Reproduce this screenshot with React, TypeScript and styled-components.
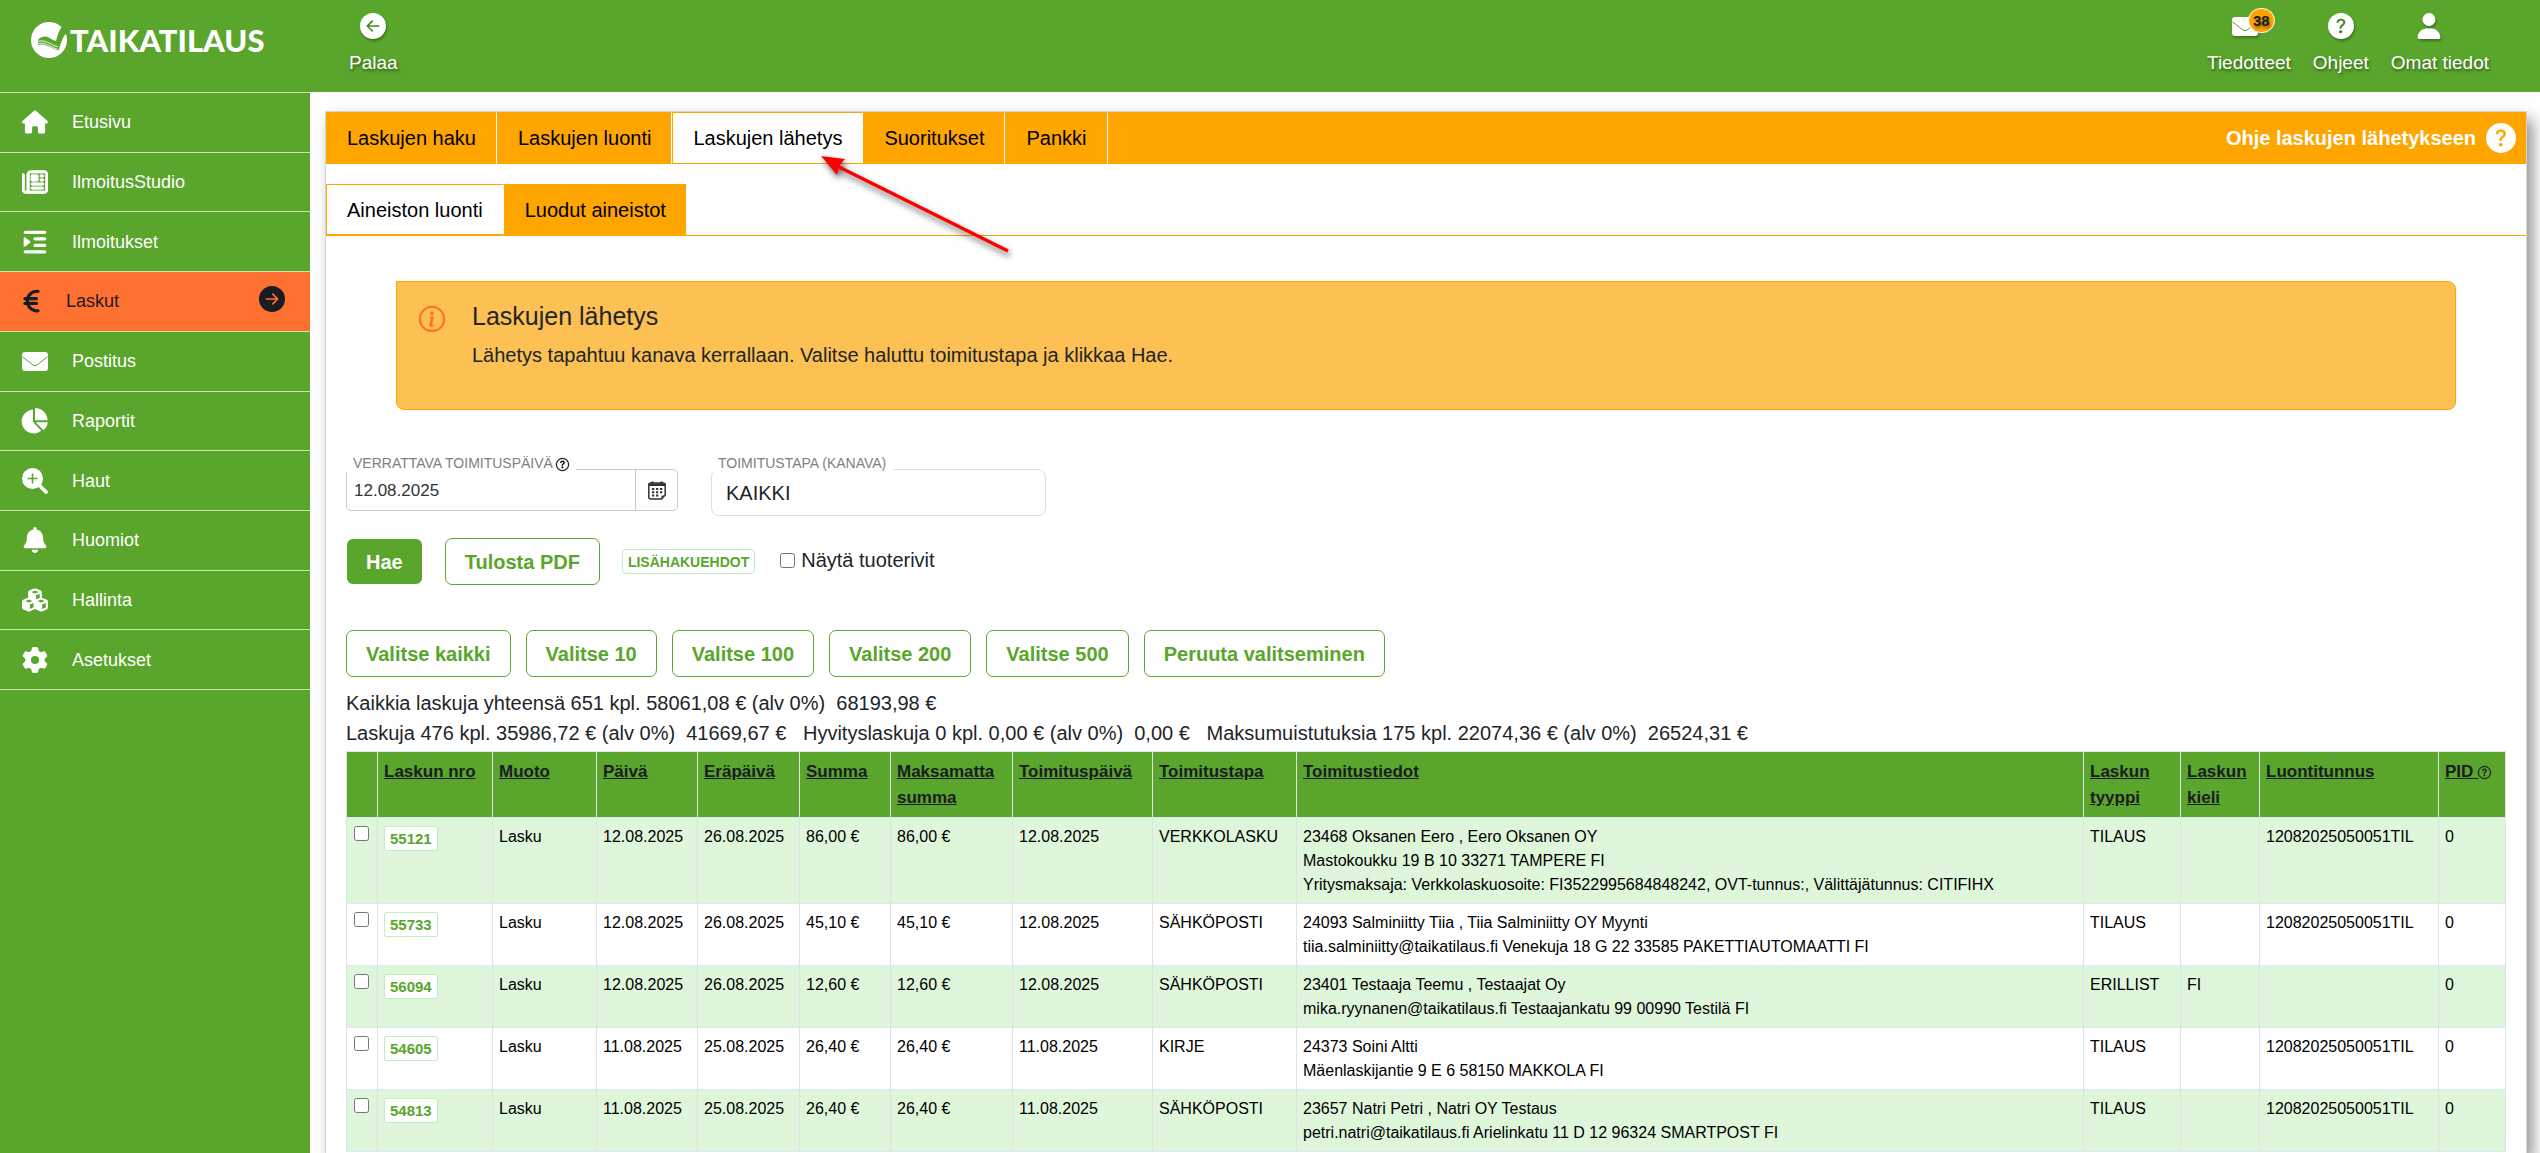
import React from 'react';
import styled, { createGlobalStyle, css } from 'styled-components';
import { FaHouse, FaRegNewspaper, FaIndent, FaEuroSign, FaBell, FaCubes, FaGear, FaUser } from 'react-icons/fa6';
import {
  BsArrowLeftCircleFill,
  BsArrowRightCircleFill,
  BsInfoCircle,
  BsQuestionCircle,
  BsQuestionCircleFill,
} from 'react-icons/bs';

const color = {
  green: '#5aa52c',
  greenLine: '#cfe5a6',
  paleGreen: '#bfeec0',
  stripe: '#def6da',
  orange: '#ffa500',
  alert: '#fdc052',
  active: '#ff7130',
  ink: '#212529',
  dark: '#1b1b24',
};

const GlobalStyle = createGlobalStyle`
  *, *::before, *::after { box-sizing: border-box; }
  body {
    margin: 0;
    background: #fff;
    color: ${color.ink};
    font: 20px/30px "Liberation Sans", Arial, Helvetica, sans-serif;
  }
  button, input, select { font-family: inherit; }
  a { color: inherit; text-decoration: none; }
`;

const Shell = styled.div`
  display: grid;
  grid-template: auto 1fr / 310px 1fr;
  height: 100vh;
  overflow: hidden;
`;

/* Header */

const Header = styled.header`
  grid-column: 1 / -1;
  display: flex;
  align-items: flex-start;
  height: 92px;
  padding-right: 51px;
  background: ${color.green};
  color: #fff;
`;

const Brand = styled.a`
  display: flex;
  align-items: center;
  gap: 3px;
  width: 349px;
  padding: 22px 0 0 31px;
  font: 900 31px/36px Lato, "Liberation Sans", sans-serif;
`;

const HeaderActions = styled.nav`
  display: flex;
  gap: 22px;
  margin-left: auto;
`;

const HeaderAction = styled.a`
  display: flex;
  flex-direction: column;
  align-items: center;
  gap: 13px;
  padding-top: 13px;
  font-size: 19px;
  line-height: 22px;
  text-shadow: 1px 2px 3px rgba(0, 0, 0, 0.45);
`;

const ActionIcon = styled.span<{ $trailing?: number }>`
  position: relative;
  display: flex;
  height: 26px;
  margin-right: ${(p) => p.$trailing ?? 0}px;
  align-items: center;
  font-size: 26px;

  svg {
    filter: drop-shadow(1px 2px 1px rgba(0, 0, 0, 0.3));
  }
`;

const Badge = styled.span`
  position: absolute;
  top: -5px;
  left: 16px;
  padding: 0 4px;
  border: 1px solid #fff;
  border-radius: 13px;
  background: ${color.orange};
  color: ${color.dark};
  font-size: 15px;
  font-weight: 700;
  line-height: 23px;
`;

/* Side menu */

const SideBar = styled.aside`
  background: ${color.green};
  color: #fff;
`;

const Menu = styled.nav`
  display: grid;
  grid-auto-rows: 1fr;
  height: 598px;
  border-top: 1px solid ${color.greenLine};
`;

const MenuLink = styled.a<{ $active?: boolean }>`
  display: flex;
  align-items: center;
  gap: 23px;
  padding: 0 25px 0 20px;
  border-bottom: 1px solid ${color.greenLine};
  font-size: 18px;
  line-height: 22px;
  ${(p) =>
    p.$active &&
    css`
      background: ${color.active};
      color: ${color.dark};
    `}
`;

const MenuIcon = styled.span<{ $narrow?: boolean }>`
  display: flex;
  justify-content: center;
  width: ${(p) => (p.$narrow ? 23 : 29)}px;
  font-size: 26px;
`;

const NewsIcon = styled(FaRegNewspaper)`
  stroke: currentColor;
  stroke-width: 16;
`;

const MenuArrow = styled(BsArrowRightCircleFill)`
  margin: 0 0 4px auto;
  font-size: 26px;
`;

/* Main panel */

const Main = styled.main`
  min-width: 0;
  overflow: hidden;
  padding: 19px 13px 0 15px;
`;

const Panel = styled.section`
  min-height: 100%;
  border: 1px solid #d6d6d6;
  border-bottom: 0;
  box-shadow: 6px 8px 14px rgba(0, 0, 0, 0.42);
`;

const TabBar = styled.nav`
  display: flex;
  height: 52px;
  background: ${color.orange};
  color: #000;
`;

const SubTabBar = styled(TabBar)`
  margin-top: 20px;
  border-bottom: 1px solid ${color.orange};
  background: none;
`;

const Tab = styled.a<{ $active?: boolean }>`
  position: relative;
  display: flex;
  align-items: center;
  padding: 0 20px;
  border: 1px solid ${color.orange};
  border-right-color: #fff;
  background: ${(p) => (p.$active ? '#fff' : color.orange)};
`;

const HelpLink = styled.a`
  display: flex;
  align-items: center;
  gap: 10px;
  margin-left: auto;
  padding-right: 10px;
  color: #fff;
  font-weight: 700;

  svg {
    font-size: 30px;
  }
`;

const Pointer = styled.svg`
  position: absolute;
  z-index: 2;
  top: 36px;
  left: 140px;
  overflow: visible;
  pointer-events: none;
  filter: drop-shadow(2px 4px 3px rgba(0, 0, 0, 0.6));
`;

const Notice = styled.div`
  display: flex;
  align-items: flex-start;
  gap: 27px;
  margin: 45px 70px 0;
  padding: 19px 22px 39px;
  border: 1px solid ${color.orange};
  border-radius: 0 8px 8px 8px;
  background: ${color.alert};

  > svg {
    margin-top: 5px;
    color: ${color.active};
    font-size: 26px;
    stroke: currentColor;
    stroke-width: 0.4;
  }

  h1 {
    margin: 0 0 9px;
    font-size: 25px;
    font-weight: 400;
    line-height: 30px;
  }

  p {
    margin: 0;
  }
`;

const Body = styled.div`
  padding: 44px 20px 0;
`;

const Fields = styled.div`
  display: flex;
  align-items: flex-start;
  gap: 33px;
`;

const Field = styled.div`
  display: flex;
  flex-direction: column;
  align-items: flex-start;
`;

const FieldLabel = styled.label`
  position: relative;
  display: flex;
  align-items: center;
  gap: 3px;
  margin-bottom: -3px;
  padding: 0 7px;
  background: #fff;
  color: #808080;
  font-size: 14px;
  line-height: 18px;

  svg {
    margin-top: 3px;
    color: #000;
    font-size: 13px;
    stroke: #000;
    stroke-width: 0.4;
  }
`;

const DateGroup = styled.div`
  display: flex;
  width: 332px;
  height: 42px;
  border: 1px solid #c8c8c8;
  border-radius: 5px;
`;

const DateInput = styled.input`
  flex: 1;
  min-width: 0;
  padding: 1px 7px 0;
  border: 0;
  background: none;
  color: #333;
  font-size: 17px;
`;

const CalendarButton = styled.button`
  display: flex;
  align-items: center;
  justify-content: center;
  width: 42px;
  padding: 0;
  border: 0;
  border-left: 1px solid #c8c8c8;
  background: none;
`;

const Select = styled.select`
  width: 335px;
  height: 47px;
  padding: 0 14px;
  border: 1px solid #dedede;
  border-radius: 8px;
  appearance: none;
  background: none;
  color: ${color.ink};
  font-size: 20px;
`;

const Actions = styled.div`
  display: flex;
  align-items: center;
  gap: 22px;
  margin-top: 22px;
`;

const PickActions = styled(Actions)`
  gap: 15px;
  margin-top: 45px;
`;

const Button = styled.button<{ $solid?: boolean }>`
  height: 47px;
  padding: 1px 19px 0;
  border: 1px solid ${(p) => (p.$solid ? 'transparent' : color.green)};
  border-radius: 7px;
  background: ${(p) => (p.$solid ? color.green : '#fff')};
  background-clip: padding-box;
  color: ${(p) => (p.$solid ? '#fff' : color.green)};
  font-size: 20px;
  font-weight: 700;
`;

const SmallButton = styled.button`
  height: 25px;
  padding: 0 5px;
  border: 1px solid ${color.paleGreen};
  border-radius: 4px;
  background: #fff;
  color: ${color.green};
  font-size: 14px;
  font-weight: 700;
`;

const Check = styled.input`
  display: block;
  width: 15px;
  height: 15px;
  margin: 0;
`;

const CheckLabel = styled.label`
  display: flex;
  align-items: center;
  gap: 6px;
  margin-left: 3px;
  padding-bottom: 3px;
`;

const Totals = styled.p`
  margin: 11px 0 3px;
  white-space: pre-wrap;
`;

/* Invoice table */

const Table = styled.table`
  width: 100%;
  table-layout: fixed;
  border-collapse: collapse;
  color: #000;
  font-size: 16px;
  line-height: 24px;

  th, td {
    padding: 7px 6px 6px;
    border: 1px solid #dee2e6;
    border-top-color: #d8e8f4;
    border-bottom-color: #d8e8f4;
    text-align: left;
    vertical-align: top;
  }

  th {
    background: ${color.green};
    color: ${color.dark};
    font-size: 17px;
    line-height: 26px;
  }

  th a {
    text-decoration: underline;
  }

  th svg {
    vertical-align: -2px;
    font-size: 13px;
    stroke: currentColor;
    stroke-width: 0.4;
  }

  tbody tr:nth-child(odd) {
    background: ${color.stripe};
  }

  td > ${Check} {
    margin: 1px 0 0 1px;
  }
`;

const InvoiceLink = styled.a`
  display: block;
  width: max-content;
  margin-top: 1px;
  padding: 0 5px;
  border: 1px solid ${color.paleGreen};
  border-radius: 2px;
  background: #fff;
  color: ${color.green};
  font-size: 15px;
  font-weight: 700;
  line-height: 23px;
`;

/* Drawn icons */

const BrandMark = () => (
  <svg width="36" height="36" viewBox="0 0 36 36" aria-hidden="true">
    <circle cx="18" cy="18" r="18" fill="#fff" />
    <path d="M31.5 4 C28 8 26.5 13 25 19 C21 18 18 14.500 14 14.500 C11 14.500 8.500 16 7 18 L7 23 C13 21 18 25 27.500 28.500 C30 22 31 15 35.500 11.500 L37 4 Z" fill={color.green} />
    <path d="M6.500 19.500 C14 17 19 22.500 27 25 M6.500 21.800 C14 19.500 19 25 26.500 27.200" fill="none" stroke="#fff" strokeWidth="0.900" />
  </svg>
);

const Envelope = () => (
  <svg width="26" height="19" viewBox="0 0 26 19" aria-hidden="true">
    <rect width="26" height="19" rx="3" fill="currentColor" />
    <path d="M0.500 4.800 L11 13 Q13 14.400 15 13 L25.500 4.800" fill="none" stroke={color.green} strokeWidth="1" />
  </svg>
);

const PieChart = () => (
  <svg width="27" height="26" viewBox="0 0 27 26" aria-hidden="true" fill="currentColor">
    <path d="M11.900 1.500 V13.800 L20.200 22.800 A12 12 0 1 1 11.900 1.500 Z" />
    <path d="M14 0 A12.500 12.500 0 0 1 26.500 12.200 H14 Z" />
    <path d="M14.800 14.300 H26.800 A12.500 12.500 0 0 1 22.400 22.200 Z" />
  </svg>
);

const ZoomIn = () => (
  <svg width="26" height="26" viewBox="0 0 26 26" aria-hidden="true">
    <circle cx="10.500" cy="10.500" r="10.500" fill="currentColor" />
    <path d="M17 17 L24 24" stroke="currentColor" strokeWidth="3.800" strokeLinecap="round" />
    <path d="M10.500 5.500 V15.500 M5.500 10.500 H15.500" stroke={color.green} strokeWidth="1.600" />
  </svg>
);

const Calendar = () => (
  <svg width="18" height="19" viewBox="0 0 18 19" aria-hidden="true">
    <path d="M2.500 2 H15.500 Q17.200 2 17.200 4 V14 L13.500 18 H2.500 Q0.800 18 0.800 16 V4 Q0.800 2 2.500 2 Z" fill="#fff" stroke="#333" strokeWidth="1.500" />
    <path d="M1 2.500 H17 V5 H1 Z M13.500 17.500 V15.500 Q13.500 14.500 14.500 14.500 H17 Z" fill="#333" />
    <path d="M4.500 0.500 V3.500 M13.500 0.500 V3.500" stroke="#333" strokeWidth="2" />
    <path d="M4 8 H14.500 M4 11.300 H14.500 M4 14.600 H11" stroke="#333" strokeWidth="2" strokeDasharray="2.300 1.700" />
  </svg>
);

const TabPointer = () => (
  <Pointer width="200" height="110" viewBox="0 0 200 110" aria-hidden="true">
    <path d="M22 16 L195 102" stroke="#f00" strokeWidth="3.500" />
    <path d="M8 7 L32 10 L26 17 L24 26 Z" fill="#f00" />
  </Pointer>
);

/* Data */

const menu = [
  { label: 'Etusivu', icon: <FaHouse /> },
  { label: 'IlmoitusStudio', icon: <NewsIcon /> },
  { label: 'Ilmoitukset', icon: <FaIndent /> },
  { label: 'Laskut', icon: <FaEuroSign />, active: true },
  { label: 'Postitus', icon: <Envelope /> },
  { label: 'Raportit', icon: <PieChart /> },
  { label: 'Haut', icon: <ZoomIn /> },
  { label: 'Huomiot', icon: <FaBell /> },
  { label: 'Hallinta', icon: <FaCubes /> },
  { label: 'Asetukset', icon: <FaGear /> },
];

const tabs = ['Laskujen haku', 'Laskujen luonti', 'Laskujen lähetys', 'Suoritukset', 'Pankki'];
const picks = ['Valitse kaikki', 'Valitse 10', 'Valitse 100', 'Valitse 200', 'Valitse 500', 'Peruuta valitseminen'];

const columns: { title: string; width?: number }[] = [
  { title: 'Laskun nro', width: 115 },
  { title: 'Muoto', width: 104 },
  { title: 'Päivä', width: 101 },
  { title: 'Eräpäivä', width: 102 },
  { title: 'Summa', width: 91 },
  { title: 'Maksamatta summa', width: 122 },
  { title: 'Toimituspäivä', width: 140 },
  { title: 'Toimitustapa', width: 144 },
  { title: 'Toimitustiedot' },
  { title: 'Laskun tyyppi', width: 97 },
  { title: 'Laskun kieli', width: 79 },
  { title: 'Luontitunnus', width: 179 },
  { title: 'PID', width: 67 },
];

const invoices = [
  {
    nro: '55121', date: '12.08.2025', due: '26.08.2025', sum: '86,00 €', channel: 'VERKKOLASKU',
    details: [
      '23468 Oksanen Eero , Eero Oksanen OY',
      'Mastokoukku 19 B 10 33271 TAMPERE FI',
      'Yritysmaksaja: Verkkolaskuosoite: FI3522995684848242, OVT-tunnus:, Välittäjätunnus: CITIFIHX',
    ],
    type: 'TILAUS', lang: '', batch: '12082025050051TIL',
  },
  {
    nro: '55733', date: '12.08.2025', due: '26.08.2025', sum: '45,10 €', channel: 'SÄHKÖPOSTI',
    details: [
      '24093 Salminiitty Tiia , Tiia Salminiitty OY Myynti',
      'tiia.salminiitty@taikatilaus.fi Venekuja 18 G 22 33585 PAKETTIAUTOMAATTI FI',
    ],
    type: 'TILAUS', lang: '', batch: '12082025050051TIL',
  },
  {
    nro: '56094', date: '12.08.2025', due: '26.08.2025', sum: '12,60 €', channel: 'SÄHKÖPOSTI',
    details: [
      '23401 Testaaja Teemu , Testaajat Oy',
      'mika.ryynanen@taikatilaus.fi Testaajankatu 99 00990 Testilä FI',
    ],
    type: 'ERILLIST', lang: 'FI', batch: '',
  },
  {
    nro: '54605', date: '11.08.2025', due: '25.08.2025', sum: '26,40 €', channel: 'KIRJE',
    details: ['24373 Soini Altti', 'Mäenlaskijantie 9 E 6 58150 MAKKOLA FI'],
    type: 'TILAUS', lang: '', batch: '12082025050051TIL',
  },
  {
    nro: '54813', date: '11.08.2025', due: '25.08.2025', sum: '26,40 €', channel: 'SÄHKÖPOSTI',
    details: [
      '23657 Natri Petri , Natri OY Testaus',
      'petri.natri@taikatilaus.fi Arielinkatu 11 D 12 96324 SMARTPOST FI',
    ],
    type: 'TILAUS', lang: '', batch: '12082025050051TIL',
  },
];

export default function App() {
  return (
    <>
      <GlobalStyle />
      <Shell>
        <Header>
          <Brand href="#">
            <BrandMark />
            TAIKATILAUS
          </Brand>
          <HeaderAction href="#">
            <ActionIcon><BsArrowLeftCircleFill /></ActionIcon>
            Palaa
          </HeaderAction>
          <HeaderActions>
            <HeaderAction href="#">
              <ActionIcon $trailing={8}>
                <Envelope />
                <Badge>38</Badge>
              </ActionIcon>
              Tiedotteet
            </HeaderAction>
            <HeaderAction href="#">
              <ActionIcon><BsQuestionCircleFill /></ActionIcon>
              Ohjeet
            </HeaderAction>
            <HeaderAction href="#">
              <ActionIcon $trailing={22}><FaUser /></ActionIcon>
              Omat tiedot
            </HeaderAction>
          </HeaderActions>
        </Header>

        <SideBar>
          <Menu>
            {menu.map((item) => (
              <MenuLink key={item.label} href="#" $active={item.active}>
                <MenuIcon $narrow={item.active}>{item.icon}</MenuIcon>
                {item.label}
                {item.active && <MenuArrow />}
              </MenuLink>
            ))}
          </Menu>
        </SideBar>

        <Main>
          <Panel>
            <TabBar>
              {tabs.map((tab) => {
                const active = tab === 'Laskujen lähetys';
                return (
                  <Tab key={tab} href="#" $active={active}>
                    {tab}
                    {active && <TabPointer />}
                  </Tab>
                );
              })}
              <HelpLink href="#">
                Ohje laskujen lähetykseen
                <BsQuestionCircleFill />
              </HelpLink>
            </TabBar>
            <SubTabBar>
              <Tab href="#" $active>Aineiston luonti</Tab>
              <Tab href="#">Luodut aineistot</Tab>
            </SubTabBar>

            <Notice>
              <BsInfoCircle overflow="visible" />
              <div>
                <h1>Laskujen lähetys</h1>
                <p>Lähetys tapahtuu kanava kerrallaan. Valitse haluttu toimitustapa ja klikkaa Hae.</p>
              </div>
            </Notice>

            <Body>
              <Fields>
                <Field>
                  <FieldLabel htmlFor="date">
                    VERRATTAVA TOIMITUSPÄIVÄ
                    <BsQuestionCircle overflow="visible" />
                  </FieldLabel>
                  <DateGroup>
                    <DateInput id="date" type="text" defaultValue="12.08.2025" />
                    <CalendarButton type="button" aria-label="Kalenteri">
                      <Calendar />
                    </CalendarButton>
                  </DateGroup>
                </Field>
                <Field>
                  <FieldLabel htmlFor="channel">TOIMITUSTAPA (KANAVA)</FieldLabel>
                  <Select id="channel" defaultValue="KAIKKI">
                    <option>KAIKKI</option>
                  </Select>
                </Field>
              </Fields>

              <Actions>
                <Button type="button" $solid>Hae</Button>
                <Button type="button">Tulosta PDF</Button>
                <SmallButton type="button">LISÄHAKUEHDOT</SmallButton>
                <CheckLabel>
                  <Check type="checkbox" />
                  Näytä tuoterivit
                </CheckLabel>
              </Actions>

              <PickActions>
                {picks.map((pick) => (
                  <Button key={pick} type="button">{pick}</Button>
                ))}
              </PickActions>

              <Totals>
                {'Kaikkia laskuja yhteensä 651 kpl. 58061,08 € (alv 0%)  68193,98 €\n'}
                {'Laskuja 476 kpl. 35986,72 € (alv 0%)  41669,67 €   Hyvityslaskuja 0 kpl. 0,00 € (alv 0%)  0,00 €   Maksumuistutuksia 175 kpl. 22074,36 € (alv 0%)  26524,31 €'}
              </Totals>

              <Table>
                <colgroup>
                  <col width={31} />
                  {columns.map((c) => (
                    <col key={c.title} width={c.width} />
                  ))}
                </colgroup>
                <thead>
                  <tr>
                    <th />
                    {columns.map((c) => (
                      <th key={c.title} scope="col">
                        <a href="#">
                          {c.title}
                          {c.title === 'PID' && <> <BsQuestionCircle overflow="visible" /></>}
                        </a>
                      </th>
                    ))}
                  </tr>
                </thead>
                <tbody>
                  {invoices.map((row) => (
                    <tr key={row.nro}>
                      <td><Check type="checkbox" aria-label={row.nro} /></td>
                      <td><InvoiceLink href="#">{row.nro}</InvoiceLink></td>
                      <td>Lasku</td>
                      <td>{row.date}</td>
                      <td>{row.due}</td>
                      <td>{row.sum}</td>
                      <td>{row.sum}</td>
                      <td>{row.date}</td>
                      <td>{row.channel}</td>
                      <td>
                        {row.details.map((line) => (
                          <div key={line}>{line}</div>
                        ))}
                      </td>
                      <td>{row.type}</td>
                      <td>{row.lang}</td>
                      <td>{row.batch}</td>
                      <td>0</td>
                    </tr>
                  ))}
                </tbody>
              </Table>
            </Body>
          </Panel>
        </Main>
      </Shell>
    </>
  );
}
